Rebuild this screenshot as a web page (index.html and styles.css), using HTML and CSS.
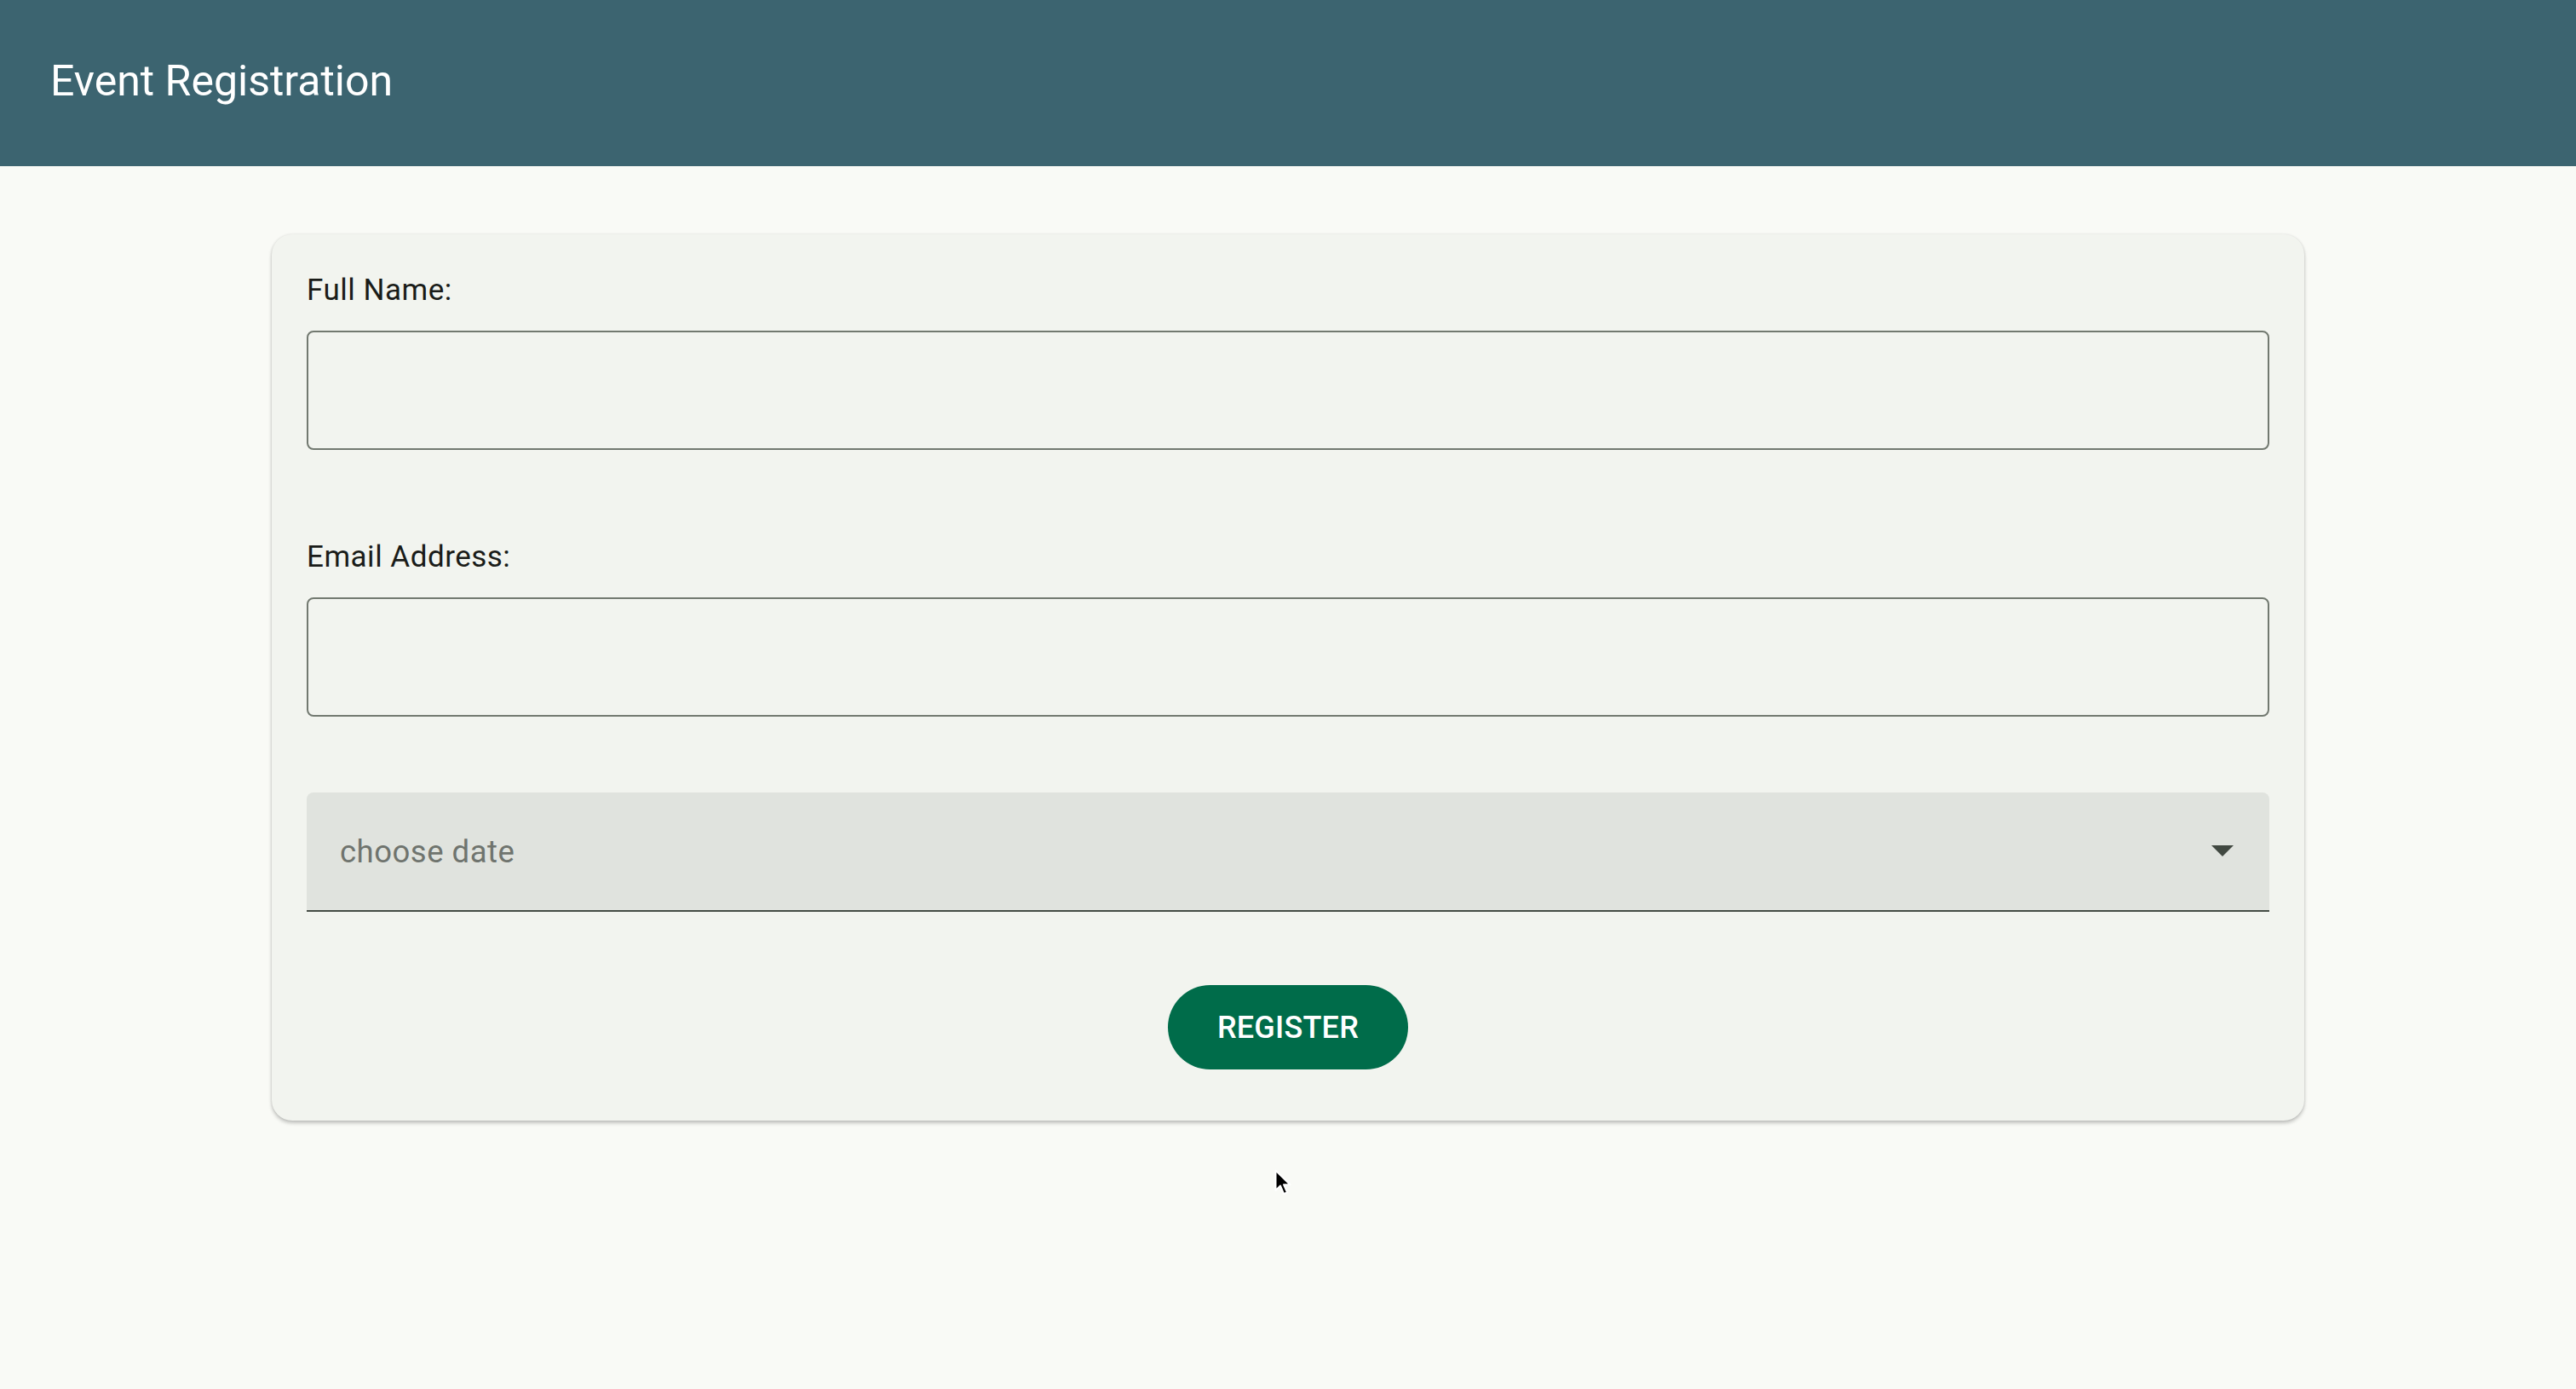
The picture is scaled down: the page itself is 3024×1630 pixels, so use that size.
FILE: index.html
```html
<!DOCTYPE html>
<html lang="en">
<head>
<meta charset="utf-8">
<title>Event Registration</title>
<link rel="stylesheet" href="styles.css">
</head>
<body>
<header class="topbar">
  <h1 class="topbar-title">Event Registration</h1>
</header>
<main class="page">
  <form class="card" onsubmit="return false;">
    <div class="field">
      <label class="field-label" for="fullname">Full Name:</label>
      <input class="text-input" id="fullname" type="text">
    </div>
    <div class="field">
      <label class="field-label" for="email">Email Address:</label>
      <input class="text-input" id="email" type="email">
    </div>
    <div class="select">
      <span class="select-placeholder">choose date</span>
      <svg class="select-arrow" width="26" height="14" viewBox="0 0 26 14"><path d="M0 0 L26 0 L13 13 Z" fill="#414941"/></svg>
    </div>
    <div class="actions">
      <button class="btn-primary" type="submit">REGISTER</button>
    </div>
  </form>
</main>
<svg class="cursor" width="22" height="32" viewBox="0 0 22 32"><path d="M1.5 1.5 L1.5 25 L7 19.5 L11 29 L15 27.3 L11 18.2 L18.5 18.2 Z" fill="#000" stroke="#fff" stroke-width="2" stroke-linejoin="round"/></svg>
</body>
</html>
```
FILE: styles.css
```css
* { box-sizing: border-box; }

html, body {
  margin: 0;
  padding: 0;
}

body {
  background: #f9faf6;
  font-family: Roboto, "Noto Sans", "Liberation Sans", sans-serif;
  color: #1a1c19;
  min-height: 1630px;
  position: relative;
}

.topbar {
  height: 195px;
  background: #3c6470;
  display: flex;
  align-items: center;
  padding: 0 0 6px 59px;
}

.topbar-title {
  margin: 0;
  font-size: 50px;
  font-weight: 400;
  color: #ffffff;
  line-height: 58px;
}

.page {
  padding-top: 80px;
}

.card {
  width: 2386px;
  margin: 0 auto;
  background: #f2f4ef;
  border-radius: 24px;
  padding: 45px 41px 60px 41px;
  box-shadow: 0 3px 4px rgba(0, 0, 0, 0.22), 0 0 3px rgba(0, 0, 0, 0.1);
}

.field {
  display: flex;
  flex-direction: column;
  margin-bottom: 105px;
}

.field + .field {
  margin-bottom: 89px;
}

.field-label {
  font-size: 35px;
  line-height: 41px;
  letter-spacing: 0.5px;
  color: #1a1c19;
  margin-bottom: 27px;
}

.text-input {
  height: 140px;
  width: 100%;
  border: 2px solid #727970;
  border-radius: 8px;
  background: transparent;
  font-family: inherit;
  font-size: 36px;
  padding: 0 36px;
  outline: none;
}

.select {
  height: 140px;
  background: #e0e3de;
  border-radius: 8px 8px 0 0;
  border-bottom: 2px solid #454c45;
  display: flex;
  align-items: center;
  justify-content: space-between;
  padding: 0 42px 0 39px;
}

.select-placeholder {
  font-size: 36.5px;
  letter-spacing: 0.5px;
  color: #6f746e;
  line-height: 42px;
  padding-top: 2px;
}

.select-arrow {
  display: block;
}

.actions {
  display: flex;
  justify-content: center;
  padding-top: 86px;
}

.btn-primary {
  width: 282px;
  height: 99px;
  border: none;
  border-radius: 50px;
  background: #006c4a;
  color: #ffffff;
  font-family: inherit;
  font-size: 36px;
  font-weight: 500;
  letter-spacing: 0.2px;
  cursor: pointer;
  padding: 0;
}

.cursor {
  position: absolute;
  left: 1496px;
  top: 1372px;
}
```
